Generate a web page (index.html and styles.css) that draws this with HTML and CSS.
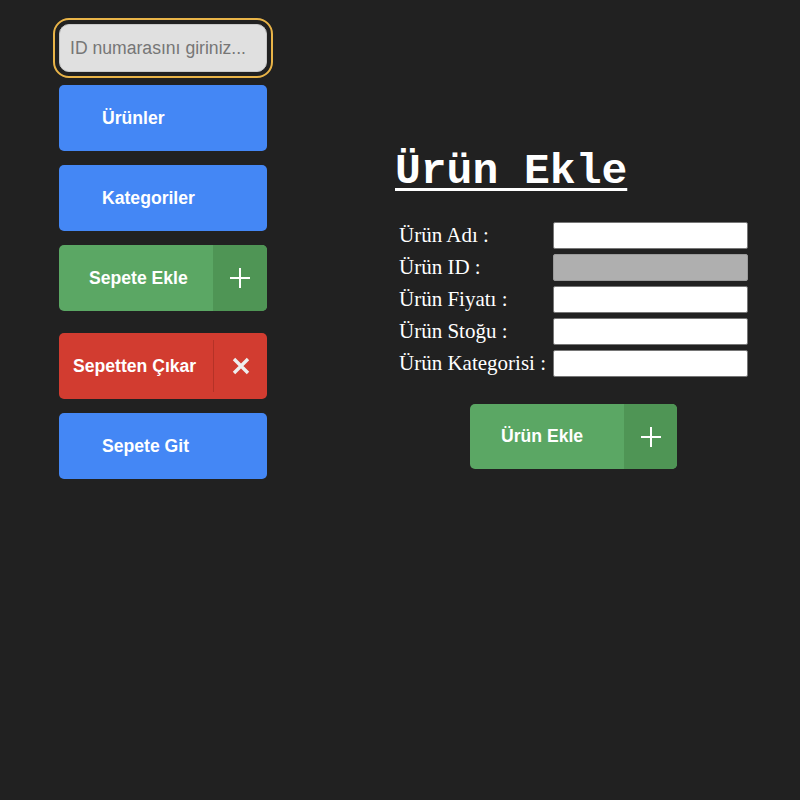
FILE: index.html
```html
<!DOCTYPE html>
<html lang="tr">
<head>
<meta charset="utf-8">
<title>Ürün Ekle</title>
<link rel="stylesheet" href="styles.css">
</head>
<body>
<div class="page">
  <aside class="sidebar">
    <input class="search" type="text" placeholder="ID numarasını giriniz...">
    <button class="btn btn-blue"><span class="btn-text">Ürünler</span></button>
    <button class="btn btn-blue"><span class="btn-text">Kategoriler</span></button>
    <button class="btn btn-green"><span class="btn-text">Sepete Ekle</span><span class="btn-icon"><svg width="22" height="22" viewBox="0 0 22 22"><path d="M11 1V21M1 11H21" stroke="#fff" stroke-width="2" fill="none"/></svg></span></button>
    <button class="btn btn-red"><span class="btn-text">Sepetten Çıkar</span><span class="btn-icon"><svg width="18" height="18" viewBox="0 0 18 18"><path d="M2 2L16 16M16 2L2 16" stroke="#eee" stroke-width="3.4" fill="none"/></svg></span></button>
    <button class="btn btn-blue"><span class="btn-text">Sepete Git</span></button>
  </aside>
  <main class="content">
    <h1 class="title">Ürün Ekle</h1>
    <div class="form">
      <label class="label">Ürün Adı :</label><input class="field" type="text">
      <label class="label">Ürün ID :</label><input class="field field-disabled" type="text" disabled>
      <label class="label">Ürün Fiyatı :</label><input class="field" type="text">
      <label class="label">Ürün Stoğu :</label><input class="field" type="text">
      <label class="label">Ürün Kategorisi :</label><input class="field" type="text">
    </div>
    <div class="submit-row">
      <button class="btn btn-green btn-submit"><span class="btn-text">Ürün Ekle</span><span class="btn-icon"><svg width="22" height="22" viewBox="0 0 22 22"><path d="M11 1V21M1 11H21" stroke="#fff" stroke-width="2" fill="none"/></svg></span></button>
    </div>
  </main>
</div>
</body>
</html>
```
FILE: styles.css
```css
html, body {
  margin: 0;
  padding: 0;
  background: #212121;
}
body {
  width: 800px;
  height: 800px;
  font-family: "Liberation Sans", Arial, sans-serif;
}
.page {
  display: flex;
  align-items: flex-start;
}
.sidebar {
  display: flex;
  flex-direction: column;
  width: 208px;
  margin-left: 59px;
  padding-top: 24px;
}
.search {
  box-sizing: border-box;
  width: 208px;
  height: 48px;
  margin: 0 0 13px 0;
  padding: 0 0 0 10px;
  border: 1px solid #c8c8c8;
  border-radius: 10px;
  background: #e0e0e0;
  font-family: "Liberation Sans", Arial, sans-serif;
  font-size: 17.6px;
  color: #333;
  outline: 2px solid #e9b448;
  outline-offset: 4px;
}
.search::placeholder {
  color: #767676;
}
.btn {
  display: flex;
  align-items: stretch;
  box-sizing: border-box;
  width: 208px;
  height: 66px;
  margin: 0 0 14px 0;
  padding: 0;
  border: none;
  border-radius: 5px;
  overflow: hidden;
  color: #fff;
  font-family: "Liberation Sans", Arial, sans-serif;
  font-weight: bold;
  font-size: 17.6px;
  cursor: pointer;
}
.btn-text {
  flex: 1;
  display: flex;
  align-items: center;
  text-align: left;
}
.btn-icon {
  width: 54px;
  display: flex;
  align-items: center;
  justify-content: center;
}
.btn-blue {
  background: #4487f5;
}
.btn-blue .btn-text {
  padding-left: 43px;
}
.btn-green {
  background: #5ba764;
}
.btn-green .btn-text {
  padding-left: 30px;
}
.btn-green .btn-icon {
  background: #4f9555;
}
.btn-red {
  background: #d23c30;
  margin-top: 8px;
}
.btn-red .btn-text {
  padding-left: 14px;
}
.btn-red .btn-icon {
  width: 53px;
  margin: 7px 0;
  border-left: 1px solid #b53227;
}
.content {
  margin-left: 128px;
  padding-top: 148px;
  width: 353px;
}
.title {
  margin: 0 0 26px 0;
  font-family: "Liberation Mono", "Courier New", monospace;
  font-weight: bold;
  font-size: 43px;
  line-height: 48px;
  color: #fff;
  text-decoration: underline;
  text-decoration-thickness: 3px;
  text-underline-offset: 5px;
}
.form {
  display: grid;
  grid-template-columns: 150px 195px;
  grid-auto-rows: 27px;
  column-gap: 4px;
  row-gap: 5px;
  margin-left: 4px;
}
.label {
  display: flex;
  align-items: center;
  font-family: "Liberation Serif", "Times New Roman", serif;
  font-size: 21px;
  color: #fff;
  white-space: nowrap;
}
.field {
  box-sizing: border-box;
  width: 195px;
  height: 27px;
  margin: 0;
  border: 1px solid #767676;
  border-radius: 2px;
  background: #fff;
}
.field-disabled {
  background: #afafaf;
  border-color: #9a9a9a;
}
.submit-row {
  display: flex;
  justify-content: center;
  margin: 27px 0 0 4px;
  width: 349px;
}
.btn-submit {
  width: 207px;
  height: 65px;
  margin: 0;
}
.btn-submit .btn-text {
  padding-left: 31px;
}
.btn-submit .btn-icon {
  width: 53px;
}
```
